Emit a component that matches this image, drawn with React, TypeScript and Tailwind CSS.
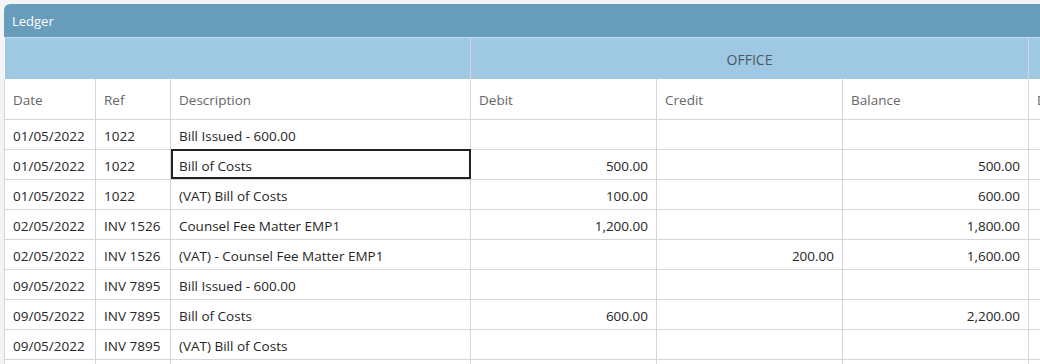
const rows = [
  { date: '01/05/2022', ref: '1022', desc: 'Bill Issued - 600.00', debit: '', credit: '', balance: '' },
  { date: '01/05/2022', ref: '1022', desc: 'Bill of Costs', debit: '500.00', credit: '', balance: '500.00', selected: true },
  { date: '01/05/2022', ref: '1022', desc: '(VAT) Bill of Costs', debit: '100.00', credit: '', balance: '600.00' },
  { date: '02/05/2022', ref: 'INV 1526', desc: 'Counsel Fee Matter EMP1', debit: '1,200.00', credit: '', balance: '1,800.00' },
  { date: '02/05/2022', ref: 'INV 1526', desc: '(VAT) - Counsel Fee Matter EMP1', debit: '', credit: '200.00', balance: '1,600.00' },
  { date: '09/05/2022', ref: 'INV 7895', desc: 'Bill Issued - 600.00', debit: '', credit: '', balance: '' },
  { date: '09/05/2022', ref: 'INV 7895', desc: 'Bill of Costs', debit: '600.00', credit: '', balance: '2,200.00' },
  { date: '09/05/2022', ref: 'INV 7895', desc: '(VAT) Bill of Costs', debit: '', credit: '', balance: '' },
  { date: '', ref: '', desc: '', debit: '', credit: '', balance: '' },
]

function App() {
  const cell = 'h-[30px] px-2 pt-[5px] pb-0 border border-[#d6d5df] whitespace-nowrap'
  return (
    <div className="w-[1040px] h-[364px] bg-[#f4f4f4] pt-1 pl-1 overflow-hidden" style={{ fontFamily: '"Open Sans", "Noto Sans", sans-serif' }}>
      <div className="bg-white rounded-tl-md overflow-hidden h-full">
        <div className="h-[34px] bg-[#689cbb] border-b border-[#c7dcea] text-white text-[13px] flex items-center px-2 pt-0.5">Ledger</div>
        <table className="table-fixed border-collapse text-[13.5px] text-[#262626] w-[1222px]">
          <colgroup>
            <col className="w-[91px]" />
            <col className="w-[75px]" />
            <col className="w-[300px]" />
            <col className="w-[186px]" />
            <col className="w-[186px]" />
            <col className="w-[186px]" />
            <col className="w-[198px]" />
          </colgroup>
          <thead>
            <tr className="bg-[#9fc8e3] h-[41px]">
              <th colSpan={3} className="border-x border-[#d6d5df] border-l-0"></th>
              <th colSpan={3} className="border-x border-[#d6d5df] font-normal text-[#4a5866] text-[14px] pt-px">OFFICE</th>
              <th className="border-x border-[#d6d5df]"></th>
            </tr>
            <tr className="h-[40px] text-left text-[#666]">
              {['Date', 'Ref', 'Description', 'Debit', 'Credit', 'Balance', 'Debit'].map((h, i) => (
                <th key={i} className="px-2 pt-0.5 font-normal border border-[#d6d5df] border-t-0">{h}</th>
              ))}
            </tr>
          </thead>
          <tbody>
            {rows.map((r, i) => (
              <tr key={i}>
                <td className={cell}>{r.date}</td>
                <td className={cell}>{r.ref}</td>
                <td className={r.selected ? 'h-[30px] px-2 pt-[5px] pb-0 whitespace-nowrap outline-2 -outline-offset-2 outline-[#222]' : cell}>{r.desc}</td>
                <td className={cell + ' text-right'}>{r.debit}</td>
                <td className={cell + ' text-right'}>{r.credit}</td>
                <td className={cell + ' text-right'}>{r.balance}</td>
                <td className={cell}></td>
              </tr>
            ))}
          </tbody>
        </table>
      </div>
    </div>
  )
}

export default App
